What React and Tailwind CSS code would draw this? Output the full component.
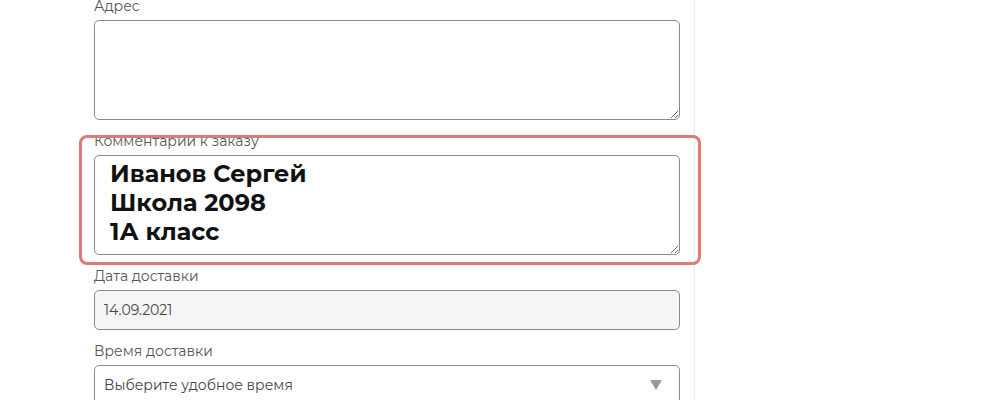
import React from "react";

export default function App() {
  const font = { fontFamily: "Montserrat, 'Open Sans', 'Noto Sans', sans-serif" };
  return (
    <div className="w-[1000px] h-[400px] overflow-hidden bg-white flex" style={font}>
      <div className="w-[695px] h-full border-r border-[#ebebeb] shadow-[1px_0_2px_rgba(0,0,0,0.04)] pl-[94px] pr-[14px]">
        <div className="flex flex-col mt-[-4px] w-[586px]">
          <label className="text-[14px] leading-[20px] text-[#555] mb-[4px]">Адрес</label>
          <textarea
            readOnly
            className="h-[100px] w-full border border-[#8a8a8a] rounded-[5px] bg-white outline-none"
          />

          <div className="relative mt-[11px] flex flex-col">
            <label className="text-[14px] leading-[20px] text-[#555] mb-[4px]">Комментарии к заказу</label>
            <textarea
              readOnly
              defaultValue={"Иванов Сергей\nШкола 2098\n1А класс"}
              className="h-[100px] w-full border border-[#8a8a8a] rounded-[5px] bg-white outline-none pl-[15px] pt-[3px] text-[24px] leading-[29.2px] font-bold text-[#111] overflow-hidden"
            />
            <div className="absolute left-[-15px] top-[4px] w-[622px] h-[130px] border-[3px] border-[#e07a76] rounded-[8px] pointer-events-none" />
          </div>

          <label className="mt-[11px] text-[14px] leading-[20px] text-[#555] mb-[4px]">Дата доставки</label>
          <div className="h-[40px] w-full border border-[#8a8a8a] rounded-[5px] bg-[#f5f5f5] flex items-center pl-[9px] text-[14px] text-[#444]">
            14.09.2021
          </div>

          <label className="mt-[11px] text-[14px] leading-[20px] text-[#555] mb-[4px]">Время доставки</label>
          <div className="h-[40px] w-full border border-[#8a8a8a] rounded-[5px] bg-white flex items-center justify-between pl-[9px] pr-[17px] text-[14px] text-[#444]">
            <span>Выберите удобное время</span>
            <span className="w-0 h-0 border-l-[6px] border-r-[6px] border-t-[10px] border-l-transparent border-r-transparent border-t-[#9a9a9a]" />
          </div>
        </div>
      </div>
      <div className="flex-1 bg-white" />
    </div>
  );
}
